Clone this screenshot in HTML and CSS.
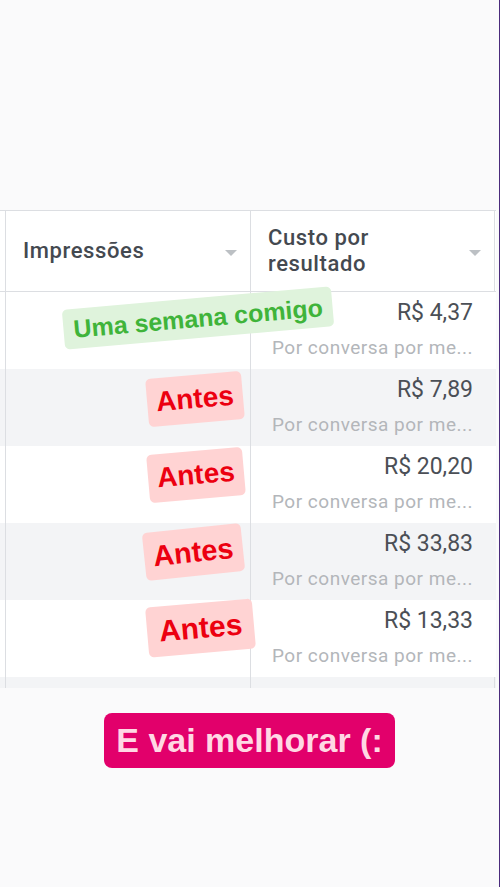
FILE: index.html
```html
<!DOCTYPE html>
<html lang="pt-BR">
<head>
    <meta charset="UTF-8">
    <meta name="viewport" content="width=device-width, initial-scale=1.0">
    <title>Custo por resultado</title>
    <link rel="stylesheet" href="styles.css">
</head>
<body>

<div class="page">
    <div class="sheet">
        <div class="row head">
            <div class="cell stub"></div>
            <div class="cell th">
                <span>Impressões</span>
                <i class="caret"></i>
            </div>
            <div class="cell th">
                <span>Custo por<br>resultado</span>
                <i class="caret"></i>
            </div>
        </div>

        <div class="row">
            <div class="cell stub"></div>
            <div class="cell"></div>
            <div class="cell val">
                <div class="price">R$ 4,37</div>
                <div class="sub">Por conversa por me...</div>
            </div>
            <span class="tag green t1">Uma semana comigo</span>
        </div>

        <div class="row alt">
            <div class="cell stub"></div>
            <div class="cell"></div>
            <div class="cell val">
                <div class="price">R$ 7,89</div>
                <div class="sub">Por conversa por me...</div>
            </div>
            <span class="tag red t2">Antes</span>
        </div>

        <div class="row">
            <div class="cell stub"></div>
            <div class="cell"></div>
            <div class="cell val">
                <div class="price">R$ 20,20</div>
                <div class="sub">Por conversa por me...</div>
            </div>
            <span class="tag red t3">Antes</span>
        </div>

        <div class="row alt">
            <div class="cell stub"></div>
            <div class="cell"></div>
            <div class="cell val">
                <div class="price">R$ 33,83</div>
                <div class="sub">Por conversa por me...</div>
            </div>
            <span class="tag red t4">Antes</span>
        </div>

        <div class="row">
            <div class="cell stub"></div>
            <div class="cell"></div>
            <div class="cell val">
                <div class="price">R$ 13,33</div>
                <div class="sub">Por conversa por me...</div>
            </div>
            <span class="tag red t5">Antes</span>
        </div>

        <div class="row alt cut">
            <div class="cell stub"></div>
            <div class="cell"></div>
            <div class="cell"></div>
        </div>
    </div>

    <div class="caption">
        <span>E vai melhorar (:</span>
    </div>
</div>

</body>
</html>
```

FILE: styles.css
```css
html, body {
    margin: 0;
    background: #fafafb;
}
body {
    font-family: Roboto, "Liberation Sans", sans-serif;
}
.page {
    height: 887px;
    border-right: 1px solid #4a2b7c;
    box-sizing: border-box;
    padding-top: 210px;
}
.sheet {
    width: 496px;
    border-top: 1px solid #dcdee2;
    background: white;
}
.row {
    position: relative;
    display: grid;
    grid-template-columns: 5px 245px 245px;
    height: 77px;
}
.row.alt { background: #f3f4f6; }
.row.head {
    height: 80px;
    border-bottom: 1px solid #dcdee2;
    background: white;
}
.row.cut { height: 11px; }
.cell {
    border-left: 1px solid #dcdee2;
}
.cell:last-child {
    border-right: 1px solid #dcdee2;
}
.cell.stub { border-left: none; }
.th {
    display: flex;
    align-items: center;
    justify-content: space-between;
    padding: 0 13px 0 17px;
    font-size: 22px;
    font-weight: 500;
    letter-spacing: 0.6px;
    color: #444950;
    line-height: 26px;
}
.caret {
    width: 0;
    height: 0;
    border-left: 6px solid transparent;
    border-right: 6px solid transparent;
    border-top: 6px solid #bcc0c4;
    margin-top: 4px;
}
.val {
    padding: 8px 22px 0 21px;
}
.price {
    text-align: right;
    font-size: 23px;
    line-height: 26px;
    color: #4b4f56;
}
.sub {
    margin-top: 11px;
    font-size: 19px;
    letter-spacing: 0.5px;
    line-height: 22px;
    color: #b3b6ba;
    white-space: nowrap;
}

/* stickers laid over the sheet */
.tag {
    position: absolute;
    font-family: "Liberation Sans", Arial, sans-serif;
    font-weight: bold;
    border-radius: 5px;
    transform: rotate(-5deg);
    white-space: nowrap;
}
.tag.green {
    background: #dff3dc;
    color: #3fb43a;
    font-size: 25px;
    line-height: 40px;
    padding: 0 10px;
}
.tag.red {
    background: #ffd3d3;
    color: #ec0010;
    font-size: 28px;
    line-height: 48px;
    padding: 0 9px;
}
.tag.t1 { left: 63px; top: 6px; }
.tag.t2 { left: 147px; top: 6px; }
.tag.t3 { left: 148px; top: 5px; }
.tag.t4 { left: 144px; top: 5px; font-size: 29px; transform: rotate(-6deg); }
.tag.t5 { left: 147px; top: 3px; font-size: 30px; padding: 0 12px; line-height: 50px; }

.caption {
    display: flex;
    justify-content: center;
    margin-top: 25px;
}
.caption span {
    background: #e2006b;
    color: #ffd8e4;
    font-family: "Liberation Sans", Arial, sans-serif;
    font-weight: bold;
    font-size: 34px;
    line-height: 55px;
    padding: 0 12px;
    border-radius: 8px;
}
```
